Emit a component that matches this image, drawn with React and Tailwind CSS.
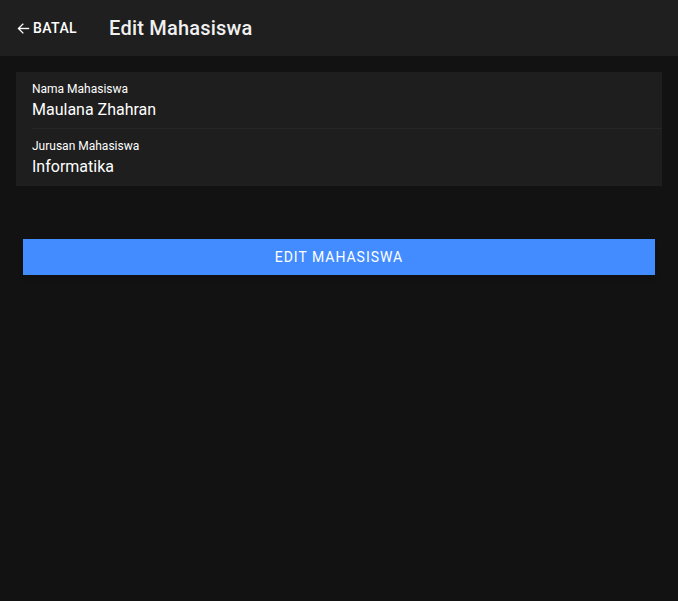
import React from "react";

const fields = [
  { label: "Nama Mahasiswa", value: "Maulana Zhahran" },
  { label: "Jurusan Mahasiswa", value: "Informatika" },
];

const App = () => {
  return (
    <div className="min-h-[601px] bg-[#121212] text-white font-['Roboto','Liberation_Sans',sans-serif]">
      {/* Toolbar */}
      <header className="h-14 bg-[#1f1f1f] flex items-center">
        <button className="flex items-center ml-4 text-white">
          <svg width="15" height="15" viewBox="0 0 24 24" fill="none" stroke="currentColor" strokeWidth="2.2" strokeLinecap="square">
            <path d="M20 12H5" />
            <path d="M11 5l-7 7 7 7" />
          </svg>
          <span className="ml-[2px] text-sm font-medium tracking-[0.03em] uppercase">Batal</span>
        </button>
        <h1 className="ml-8 text-xl font-medium tracking-[0.01em] text-[#f0f0f0]">Edit Mahasiswa</h1>
      </header>

      {/* Form */}
      <div className="mx-4 mt-4 bg-[#1e1e1e]">
        {fields.map((f, i) => (
          <div key={f.label} className="pl-4">
            <div className={"pt-[9px] " + (i === 0 ? "pb-[6px] border-b border-[#262626]" : "pb-[7px]")}>
              <p className="text-xs leading-4">{f.label}</p>
              <p className="mt-px text-base leading-6">{f.value}</p>
            </div>
          </div>
        ))}
      </div>

      <div className="px-[23px] mt-[53px]">
        <button className="w-full h-9 bg-[#428cff] text-white text-sm font-normal tracking-[0.07em] uppercase shadow-md">
          Edit Mahasiswa
        </button>
      </div>
    </div>
  );
};

export default App;
